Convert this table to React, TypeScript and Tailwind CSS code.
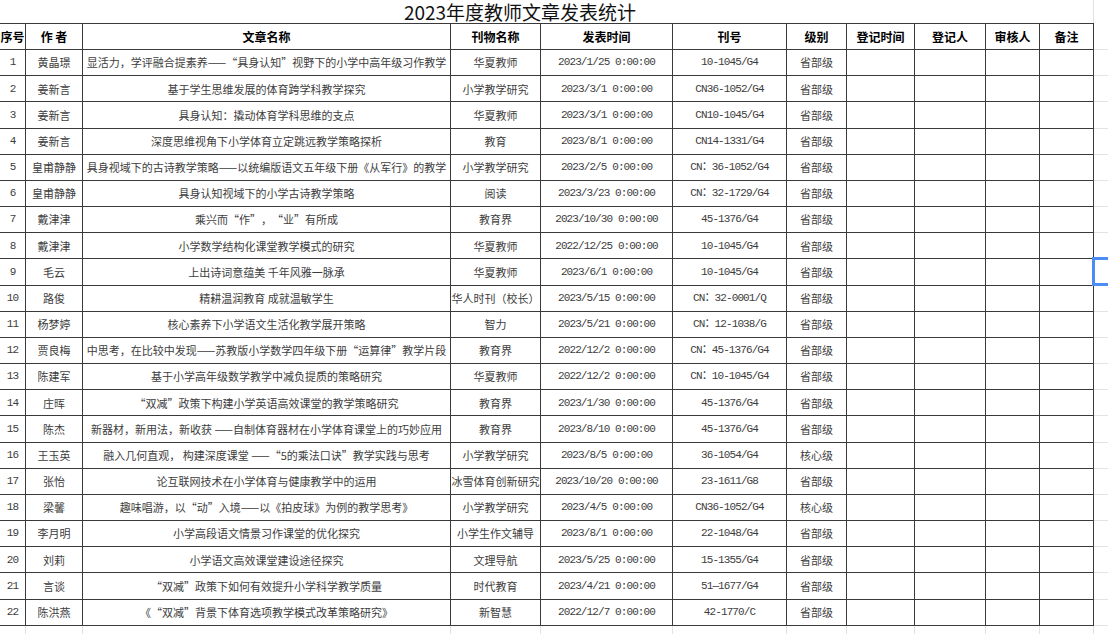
import React from 'react';

const grid = "grid grid-cols-[26px_57px_368px_90px_132px_114px_60px_68px_71px_54px_54px_14px]";
const cjk = { fontFamily: "'Noto Sans CJK SC', 'Noto Sans', sans-serif" };
const mono = { fontFamily: "'Liberation Mono', 'Noto Sans CJK SC', monospace" };

type Row = [string, string, string, string, string, string];

const rows: Row[] = [
    ["黄晶璟", "显活力，学评融合提素养——“具身认知”视野下的小学中高年级习作教学", "华夏教师", "2023/1/25 0:00:00", "10-1045/G4", "省部级"],
    ["姜新言", "基于学生思维发展的体育跨学科教学探究", "小学教学研究", "2023/3/1 0:00:00", "CN36-1052/G4", "省部级"],
    ["姜新言", "具身认知：撬动体育学科思维的支点", "华夏教师", "2023/3/1 0:00:00", "CN10-1045/G4", "省部级"],
    ["姜新言", "深度思维视角下小学体育立定跳远教学策略探析", "教育", "2023/8/1 0:00:00", "CN14-1331/G4", "省部级"],
    ["皇甫静静", "具身视域下的古诗教学策略——以统编版语文五年级下册《从军行》的教学", "小学教学研究", "2023/2/5 0:00:00", "CN：36-1052/G4", "省部级"],
    ["皇甫静静", "具身认知视域下的小学古诗教学策略", "阅读", "2023/3/23 0:00:00", "CN：32-1729/G4", "省部级"],
    ["戴津津", "乘兴而“作”，“业”有所成", "教育界", "2023/10/30 0:00:00", "45-1376/G4", "省部级"],
    ["戴津津", "小学数学结构化课堂教学模式的研究", "华夏教师", "2022/12/25 0:00:00", "10-1045/G4", "省部级"],
    ["毛云", "上出诗词意蕴美 千年风雅一脉承", "华夏教师", "2023/6/1 0:00:00", "10-1045/G4", "省部级"],
    ["路俊", "精耕温润教育 成就温敏学生", "华人时刊（校长）", "2023/5/15 0:00:00", "CN：32-0001/Q", "省部级"],
    ["杨梦婷", "核心素养下小学语文生活化教学展开策略", "智力", "2023/5/21 0:00:00", "CN：12-1038/G", "省部级"],
    ["贾良梅", "中思考，在比较中发现——苏教版小学数学四年级下册“运算律”教学片段", "教育界", "2022/12/2 0:00:00", "CN：45-1376/G4", "省部级"],
    ["陈建军", "基于小学高年级数学教学中减负提质的策略研究", "华夏教师", "2022/12/2 0:00:00", "CN：10-1045/G4", "省部级"],
    ["庄晖", "“双减”政策下构建小学英语高效课堂的教学策略研究", "教育界", "2023/1/30 0:00:00", "45-1376/G4", "省部级"],
    ["陈杰", "新器材，新用法，新收获 ——自制体育器材在小学体育课堂上的巧妙应用", "教育界", "2023/8/10 0:00:00", "45-1376/G4", "省部级"],
    ["王玉英", "融入几何直观， 构建深度课堂 ——“5的乘法口诀”教学实践与思考", "小学教学研究", "2023/8/5 0:00:00", "36-1054/G4", "核心级"],
    ["张怡", "论互联网技术在小学体育与健康教学中的运用", "冰雪体育创新研究", "2023/10/20 0:00:00", "23-1611/G8", "省部级"],
    ["梁馨", "趣味唱游，以“动”入境——以《拍皮球》为例的教学思考》", "小学教学研究", "2023/4/5 0:00:00", "CN36-1052/G4", "核心级"],
    ["李月明", "小学高段语文情景习作课堂的优化探究", "小学生作文辅导", "2023/8/1 0:00:00", "22-1048/G4", "省部级"],
    ["刘莉", "小学语文高效课堂建设途径探究", "文理导航", "2023/5/25 0:00:00", "15-1355/G4", "省部级"],
    ["言谈", "“双减”政策下如何有效提升小学科学教学质量", "时代教育", "2023/4/21 0:00:00", "51—1677/G4", "省部级"],
    ["陈洪燕", "《“双减”背景下体育选项教学模式改革策略研究》", "新智慧", "2022/12/7 0:00:00", "42-1770/C", "省部级"],
];

const headers = ["序号", "作 者", "文章名称", "刊物名称", "发表时间", "刊号", "级别", "登记时间", "登记人", "审核人", "备注"];

const cell = "flex items-center justify-center overflow-hidden whitespace-nowrap border-r border-b border-[#3a3a3a]";
const ghost = "border-b border-[#e2e2e2]";

// curly quotes take a full em in the sheet, like the rest of the CJK text
function Wide({ text }: { text: string }) {
    const parts = text.split(/([“”])/);
    return (
        <span>
            {parts.map((p, i) => {
                if (p === "“") return <span key={i} className="inline-block w-[11px] text-right">{p}</span>;
                if (p === "”") return <span key={i} className="inline-block w-[11px] text-left">{p}</span>;
                return <React.Fragment key={i}>{p}</React.Fragment>;
            })}
        </span>
    );
}

export default function App() {
    return (
        <div className="relative w-[1108px] h-[634px] overflow-hidden bg-white">
            {/* title row (merged across to 审核人) */}
            <div className={`${grid} h-[23px]`}>
                <div className="col-span-10 pt-[1px] text-center text-[19px] leading-[22px] text-[#111]" style={cjk}>
                    2023年度教师文章发表统计
                </div>
                <div className="border-r border-[#e2e2e2]" />
                <div />
            </div>

            {/* header */}
            <div className={`${grid} h-[27px]`}>
                {headers.map((h) => (
                    <div key={h} className={`${cell} border-t text-[12px] font-bold text-black`} style={cjk}>
                        {h}
                    </div>
                ))}
                <div className={ghost} />
            </div>

            {rows.map((r, i) => (
                <div key={i} className={`${grid} h-[26.18px]`}>
                    <div className={`${cell} text-[11px] tracking-[-0.9px] text-[#3d3d3d]`} style={mono}>{i + 1}</div>
                    <div className={`${cell} text-[11px] text-[#3d3d3d]`} style={cjk}>{r[0]}</div>
                    <div className={`${cell} text-[11px] text-[#3d3d3d]`} style={cjk}><Wide text={r[1]} /></div>
                    <div className={`${cell} text-[11px] text-[#3d3d3d]`} style={cjk}>{r[2]}</div>
                    <div className={`${cell} text-[11px] tracking-[-0.9px] text-[#3d3d3d]`} style={mono}>{r[3]}</div>
                    <div className={`${cell} text-[11px] tracking-[-0.9px] text-[#3d3d3d]`} style={mono}>{r[4]}</div>
                    <div className={`${cell} text-[11px] text-[#3d3d3d]`} style={cjk}>{r[5]}</div>
                    <div className={cell} />
                    <div className={cell} />
                    <div className={cell} />
                    <div className={cell} />
                    <div className={ghost} />
                </div>
            ))}

            {/* empty sheet below */}
            <div className={`${grid} h-[20px]`}>
                {headers.map((h) => (
                    <div key={h} className="border-r border-[#e2e2e2]" />
                ))}
                <div />
            </div>

            {/* cell selection */}
            <div className="absolute left-[1092px] top-[257px] w-[24px] h-[29px] border-[3px] border-[#4b8cf5]" />
        </div>
    );
}
